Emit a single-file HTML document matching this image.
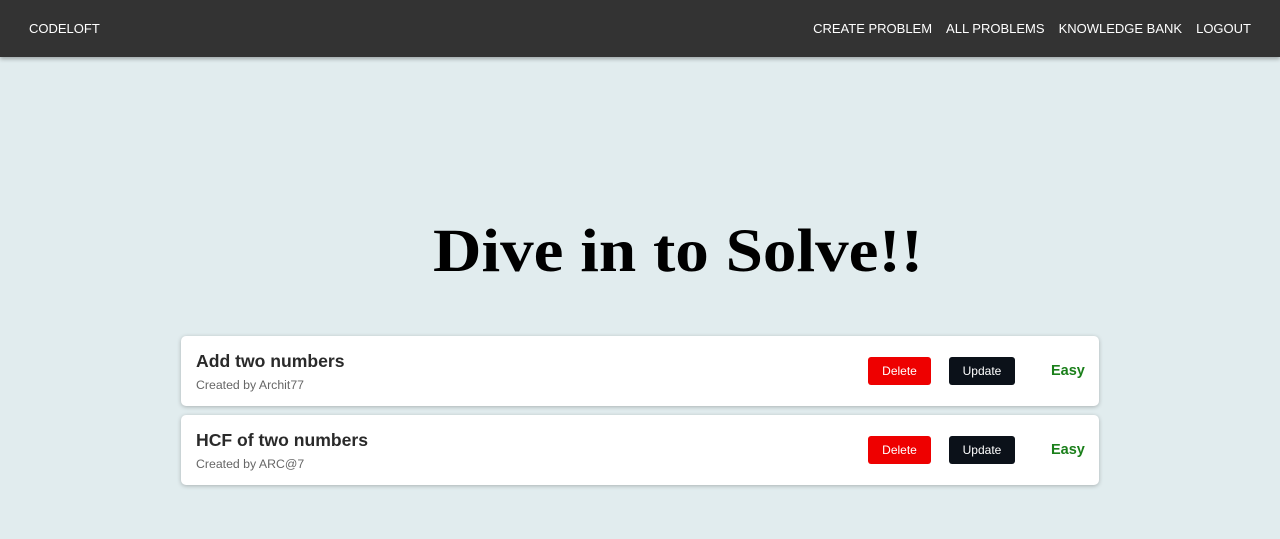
<!DOCTYPE html>
<html><head><style>
*{box-sizing:border-box;margin:0;padding:0}
body{width:1280px;height:539px;overflow:hidden;background:#e1ecee;font-family:"Liberation Sans",sans-serif;}
.nav{height:57px;background:#333;color:#fff;display:flex;align-items:center;justify-content:space-between;padding:0 29px;box-shadow:0 2px 4px rgba(0,0,0,.3);font-size:13px}
.nav .links span{margin-left:14px}
h1{font-family:"Liberation Serif",serif;font-weight:bold;font-size:61px;position:absolute;top:217px;left:433px;white-space:nowrap;color:#000;transform:scaleX(1.1);transform-origin:left}
.card{position:absolute;left:181px;width:918px;height:70px;background:#fff;border-radius:5px;box-shadow:0 1px 4px rgba(0,0,0,.25)}
.t{position:absolute;left:15px;top:15px;font-size:17.6px;font-weight:bold;color:#2a2a2a}
.s{position:absolute;left:15px;top:42px;font-size:12.3px;color:#666}
.b{position:absolute;top:21px;height:28px;border-radius:3px;color:#fff;font-size:12px;display:flex;align-items:center;justify-content:center}
.d{left:687px;width:63px;background:#ee0000}
.u{left:768px;width:66px;background:#0b1119}
.e{position:absolute;left:870px;top:27px;font-size:14.5px;font-weight:bold;color:#1a7f1a}
</style></head><body>
<div class="nav"><div>CODELOFT</div><div class="links"><span>CREATE PROBLEM</span><span>ALL PROBLEMS</span><span>KNOWLEDGE BANK</span><span>LOGOUT</span></div></div>
<h1>Dive in to Solve!!</h1>
<div class="card" style="top:336px"><div class="t">Add two numbers</div><div class="s">Created by Archit77</div><div class="b d">Delete</div><div class="b u">Update</div><div class="e">Easy</div></div>
<div class="card" style="top:415px"><div class="t">HCF of two numbers</div><div class="s">Created by ARC@7</div><div class="b d">Delete</div><div class="b u">Update</div><div class="e">Easy</div></div>
</body></html>
